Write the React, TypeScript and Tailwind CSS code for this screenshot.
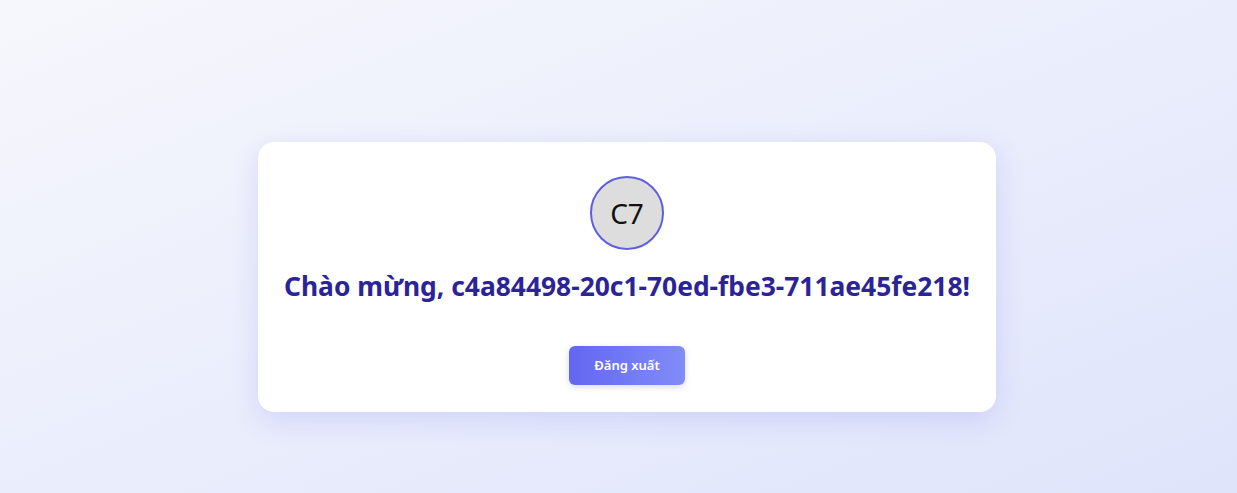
export default function App() {
  const userId = 'c4a84498-20c1-70ed-fbe3-711ae45fe218'

  return (
    <div
      className="min-h-screen w-full bg-gradient-to-br from-[#f6f7fc] to-[#dfe4fb] pt-[142px] pl-[17px] flex justify-center"
      style={{ fontFamily: '"Noto Sans", "Open Sans", sans-serif' }}
    >
      <div className="w-[738px] h-[270px] bg-white rounded-2xl shadow-[0_8px_28px_rgba(99,102,241,0.18)] flex flex-col items-center pt-[34px]">
        <div className="w-[74px] h-[74px] rounded-full border-2 border-[#5d5fe0] bg-[#dddddd] flex items-center justify-center text-[28px] text-[#111]">
          C7
        </div>
        <h1 className="mt-[18px] text-[26.4px] font-bold text-[#2b2498] leading-[36px] whitespace-nowrap">
          Chào mừng, {userId}!
        </h1>
        <button className="mt-[42px] w-[116px] h-[39px] rounded-md bg-gradient-to-r from-[#6366f1] to-[#818cf8] text-white text-[13px] font-semibold shadow-[0_2px_6px_rgba(99,102,241,0.25)]">
          Đăng xuất
        </button>
      </div>
    </div>
  )
}
